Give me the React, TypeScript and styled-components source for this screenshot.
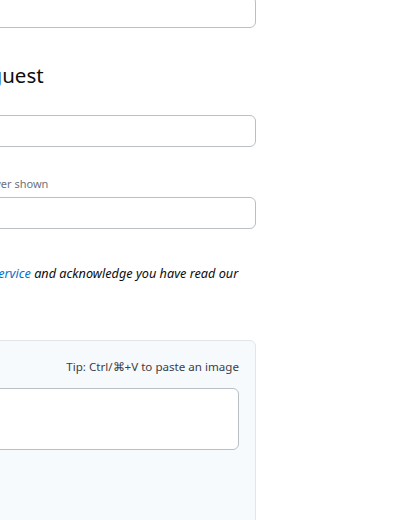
import React from "react";
import styled, { createGlobalStyle } from "styled-components";

const Global = createGlobalStyle`
  html, body { margin: 0; padding: 0; background: #ffffff; overflow: hidden; }
  body { font-family: "Noto Sans", "Open Sans", Arial, sans-serif; color: #232629; }
`;

const Page = styled.div`
  width: 386px;
  margin: -4px 0 0 -130px;
  display: flex;
  flex-direction: column;
`;

const Input = styled.div`
  box-sizing: border-box;
  height: 32px;
  border: 1px solid #babfc4;
  border-radius: 6px;
  background: #ffffff;
`;

const Heading = styled.h2`
  margin: 35px 0 5px;
  font-size: 20.5px;
  line-height: 24px;
  font-weight: 400;
  color: #0c0d0e;
`;

const Field = styled.div<{ $gap?: number }>`
  display: flex;
  flex-direction: column;
  margin-top: ${(p) => p.$gap ?? 0}px;
`;

const Label = styled.label`
  font-size: 13px;
  line-height: 16px;
  font-weight: 600;
  color: #0c0d0e;
  margin-bottom: 7px;
`;

const Hint = styled.div`
  font-size: 11px;
  line-height: 15px;
  color: #6a737c;
  margin: -6px 0 6px;
`;

const Agreement = styled.p`
  margin: 36px 0 0;
  font-size: 12.7px;
  line-height: 17px;
  font-style: italic;
  color: #0c0d0e;
`;

const Link = styled.a`
  color: #0074cc;
  text-decoration: none;
`;

const Panel = styled.div`
  box-sizing: border-box;
  margin-top: 41px;
  min-height: 240px;
  padding: 18px 16px 16px;
  background: #f7fafd;
  border: 1px solid #e3e6e8;
  border-radius: 6px;
  display: flex;
  flex-direction: column;
`;

const Tip = styled.div`
  align-self: flex-end;
  font-size: 11.6px;
  line-height: 16px;
  color: #3b4045;
  margin-bottom: 13px;
`;

const TextArea = styled.div`
  box-sizing: border-box;
  height: 62px;
  border: 1px solid #babfc4;
  border-radius: 6px;
  background: #ffffff;
`;

export default function App() {
  return (
    <>
      <Global />
      <Page>
        <Input />
        <Heading>Continue as guest</Heading>
        <Field>
          <Label>Name</Label>
          <Input />
        </Field>
        <Field $gap={12}>
          <Label>Email</Label>
          <Hint>Email is required, but never shown</Hint>
          <Input />
        </Field>
        <Agreement>
          Agree to our <Link href="#">terms of service</Link> and acknowledge you have read our{" "}
          <Link href="#">privacy policy</Link>.
        </Agreement>
        <Panel>
          <Tip>Tip: Ctrl/⌘+V to paste an image</Tip>
          <TextArea />
        </Panel>
      </Page>
    </>
  );
}
